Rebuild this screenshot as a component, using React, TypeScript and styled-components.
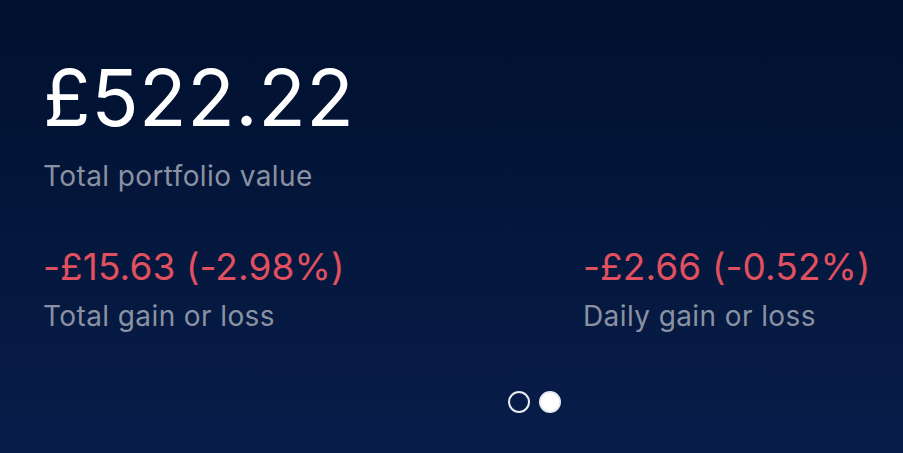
import React from 'react';
import styled, { createGlobalStyle } from 'styled-components';

const GlobalStyle = createGlobalStyle`
  html, body {
    margin: 0;
    padding: 0;
    background: #00102e;
  }
  body {
    font-family: Inter, "Noto Sans", "Liberation Sans", sans-serif;
  }
`;

const Screen = styled.div`
  width: 903px;
  height: 453px;
  box-sizing: border-box;
  padding: 52px 43px 0 43px;
  background: linear-gradient(180deg, #00102e 0%, #081d4a 100%);
  display: flex;
  flex-direction: column;
  overflow: hidden;
`;

const TotalValue = styled.div`
  color: #ffffff;
  font-size: 78px;
  font-weight: 400;
  line-height: 92px;
  letter-spacing: 0.5px;
`;

const Caption = styled.div<{ $gap?: number }>`
  color: #8a91a2;
  font-size: 28px;
  line-height: 36px;
  letter-spacing: 0.4px;
  white-space: nowrap;
  margin-top: ${(p) => p.$gap ?? 0}px;
`;

const StatsRow = styled.div`
  display: grid;
  grid-template-columns: 540px 1fr;
  margin-top: 50px;
`;

const Stat = styled.div`
  display: flex;
  flex-direction: column;
`;

const Change = styled.div<{ $negative?: boolean }>`
  color: ${(p) => (p.$negative ? '#e0505f' : '#3fbf7f')};
  font-size: 37px;
  line-height: 45px;
  letter-spacing: 0.1px;
  white-space: nowrap;
`;

const Pager = styled.div`
  display: flex;
  justify-content: center;
  gap: 9px;
  margin-top: 57px;
  padding-left: 166px;
`;

const Dot = styled.span<{ $active?: boolean }>`
  width: 22px;
  height: 22px;
  box-sizing: border-box;
  border-radius: 50%;
  border: 2.5px solid #e8ebf2;
  background: ${(p) => (p.$active ? '#ffffff' : 'transparent')};
`;

const stats = [
  { value: '-£15.63 (-2.98%)', label: 'Total gain or loss' },
  { value: '-£2.66 (-0.52%)', label: 'Daily gain or loss' },
];

const App = () => {
  return (
    <>
      <GlobalStyle />
      <Screen>
        <TotalValue>£522.22</TotalValue>
        <Caption $gap={14}>Total portfolio value</Caption>
        <StatsRow>
          {stats.map((s) => (
            <Stat key={s.label}>
              <Change $negative>{s.value}</Change>
              <Caption $gap={9}>{s.label}</Caption>
            </Stat>
          ))}
        </StatsRow>
        <Pager>
          <Dot />
          <Dot $active />
        </Pager>
      </Screen>
    </>
  );
};

export default App;
